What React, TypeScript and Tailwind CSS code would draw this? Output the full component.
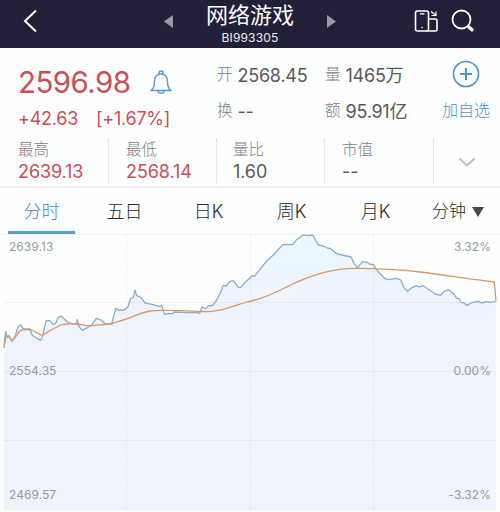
import React from "react";

const SANS = "font-['Inter','Noto_Sans_CJK_SC',sans-serif]";

const PRICE =
  "4,345 5.7,331.7 7.3,337 9,335.5 12,341.7 15,336 18,326.7 20.7,324.7 23.3,329 30,329 32.3,335.3 36.7,338.3 40.7,340.3 42.7,336 46,320.7 50,320.7 53.3,324.7 55.7,323.3 58.3,317.3 61,316 64,318.7 68.3,322.7 76,324.3 77.3,319.3 78.7,326 82.3,330.3 87.3,327.7 91.7,325 96.3,318.3 101.7,320.3 105,323.7 111.7,324 113.3,317.3 116,308.3 118.7,310.3 124,310 127.7,307.3 130.7,298.3 133.3,297.7 135,290 136.7,295.7 141,297.7 145,303 153.3,304.7 158.3,306.3 161.7,305.7 164.7,314.3 168,313.3 172.3,313.7 174.3,312 186.7,312.7 196.7,312.7 199.7,313.5 202,307 206,308.7 208.3,306 212.7,305.3 216.7,300 220.7,291.7 223.3,285.3 226,286 230,281.3 233.3,280.7 238.3,287.3 240.7,287.3 245,282.3 250,278 252,275.7 254.3,276.3 260,269.3 266.7,261 273.3,255 282.7,244.7 286.7,244.3 292.7,244.7 296.7,239.7 302.7,234.9 308.3,235.5 312.7,235 315.5,240 318.3,245 323.3,246 327.3,248 330.7,248.7 336.7,253.7 344,255.5 351,257 354,263.3 357.3,268 362.7,261.3 366.7,262.3 370,264.3 373.3,264.3 376.7,270 385,278.7 387.3,279.7 396.7,278.3 400.7,280 404.3,288.3 407.3,291.3 411.7,287.7 416.7,285.7 419,287 423.3,285.7 428.3,289.3 435,294 440.7,295.3 444,291.3 448.7,289.7 453.3,293.3 456.7,298 459,298.7 461,302.3 464.3,303 466.7,305.3 471.7,302.7 478.3,301.3 481.7,303 486.7,301.7 490,302.3 495.7,301.7";

const AVERAGE =
  "M4 348 L6 336 L9 337.3 L12.7 340 C16 338 18 331 21.7 330 C25 329.5 28 329 31.7 330 C36 331.5 39 335 42.7 335.3 C45 334 47 332 50 330.7 C55 328.5 59 325 63.3 324.3 C68 323.5 73 324 76.7 324 S84 325.7 88.3 325.7 S108 324.5 113.3 323 S124 320 130 317.7 S141 312.5 150 311 S170 310.7 180 310.7 S194 311.7 203 311.7 S220 310.3 226.7 308.3 S241 303.3 250 301.3 S274 293.5 286.7 287 S312 275.8 323.3 272.7 S343 268.3 356.7 268.3 S396 269 420 272 S470 279 494.3 282 L496 301";

function Stat({ label, value, red, width }: { label: string; value: string; red?: boolean; width: string }) {
  return (
    <div className={`${width} flex h-[44px] shrink-0 flex-col border-r border-dotted border-[#d2d2d4]`}>
      <span className="text-[15.5px] font-light leading-[21px] text-[#808084]">{label}</span>
      <span className={`text-[18px] leading-[24px] tracking-[-0.1px] ${red ? "text-[#c94f54]" : "text-[#59595b]"}`}>{value}</span>
    </div>
  );
}

function Pair({ label, value }: { label: string; value: string }) {
  return (
    <div className="flex h-[36px] items-center gap-[5px] whitespace-nowrap font-light">
      <span className="text-[15.5px] text-[#808084]">{label}</span>
      <span className="text-[18px] font-normal tracking-[-0.25px] text-[#59595b]">{value}</span>
    </div>
  );
}

function Header() {
  return (
    <header className="flex h-12 shrink-0 items-center bg-[#221f38] text-white">
      <svg className="ml-[22px] mt-[-6px] h-6 w-4" viewBox="0 0 16 24" fill="none" stroke="currentColor" strokeWidth="2">
        <path d="M14 1.5 3 12l11 10.5" />
      </svg>
      <svg className="ml-[126px] mt-[-5px] h-[13px] w-[9px]" viewBox="0 0 9 13"><path d="M9 0v13L0 6.5z" fill="#9a98a3" /></svg>
      <div className="ml-[27px] flex w-[100px] flex-col items-center">
        <h1 className="mt-[-4px] whitespace-nowrap text-[22px] font-normal leading-[30px]">网络游戏</h1>
        <span className="text-[12px] leading-[15px] tracking-[0.15px] text-[#eeedf1]">BI993305</span>
      </div>
      <svg className="ml-[27px] mt-[-5px] h-[13px] w-[9px]" viewBox="0 0 9 13"><path d="M0 0v13l9-6.5z" fill="#9a98a3" /></svg>
      <svg className="ml-[78px] mt-[-6px] h-[24px] w-[25px]" viewBox="0 0 25 24" fill="none" stroke="currentColor" strokeWidth="1.6">
        <rect x="1.5" y="2" width="13" height="20" rx="2" />
        <path d="M15 10h6.5a1.5 1.5 0 0 1 1.5 1.500v9a1.500 1.500 0 0 1-1.500 1.500H13" />
        <path d="M6 4.800h4.500M17 2.500l4.500 3.500M22 2.500v4h-4.500" strokeWidth="1.200" />
        <circle cx="8" cy="18.5" r=".8" fill="currentColor" stroke="none" />
      </svg>
      <svg className="ml-[12px] mt-[-6px] h-6 w-6" viewBox="0 0 24 24" fill="none" stroke="currentColor">
        <circle cx="10.5" cy="10.5" r="9" strokeWidth="1.8" />
        <path d="m16.800 16.800 1.700 1.700" strokeWidth="2" />
        <path d="m18 18.200 3 2.600" strokeWidth="3.400" strokeLinecap="round" />
      </svg>
    </header>
  );
}

function Quote() {
  return (
    <section className="h-[140px] shrink-0 border-b-2 border-[#f2f2f3]">
      <div className="flex h-[91px] pl-[18px]">
        <div className="w-[199px] shrink-0 text-[#c94f54]">
          <div className="flex h-[56px] items-center pt-[12px]">
            <span className="w-[132px] text-[29.5px] tracking-[-0.55px]">2596.98</span>
            <svg className="mt-[1px] h-[25px] w-[22px]" viewBox="0 0 22 25" fill="none" stroke="#559bd7" strokeWidth="1.5" strokeLinejoin="round">
              <path d="M1 20.500c3-2 3.500-5 3.500-9C4.500 7 7 4 11 4s6.500 3 6.500 7.500c0 4 .5 7 3.500 9zM8 21c.5 3 5.500 3 6 0M9 4.200V3a2 2 0 0 1 4 0v1.200" />
            </svg>
          </div>
          <div className="flex h-[29px] items-center whitespace-nowrap text-[18px] tracking-[-0.25px]">
            <span className="w-[78px]">+42.63</span>
            <span>[+1.67%]</span>
          </div>
        </div>
        <div className="w-[108px] shrink-0 pt-[9px]">
          <Pair label="开" value="2568.45" />
          <Pair label="换" value="--" />
        </div>
        <div className="w-[116px] shrink-0 pt-[9px]">
          <Pair label="量" value="1465万" />
          <Pair label="额" value="95.91亿" />
        </div>
        <button className="flex w-[50px] flex-col items-center pt-[12px] text-[#4a92d2]">
          <svg className="h-7 w-7" viewBox="0 0 28 28" fill="none" stroke="currentColor">
            <circle cx="14" cy="14" r="12.500" strokeWidth="1.600" />
            <path d="M14 8v12M8 14h12" strokeWidth="2" />
          </svg>
          <span className="mt-[10px] whitespace-nowrap text-[16px] font-light leading-[24px]">加自选</span>
        </button>
      </div>
      <div className="flex pl-[18px]">
        <Stat width="w-[91px]" label="最高" value="2639.13" red />
        <Stat width="w-[108px] pl-[17px]" label="最低" value="2568.14" red />
        <Stat width="w-[108px] pl-[16px]" label="量比" value="1.60" />
        <Stat width="w-[109px] pl-[17px]" label="市值" value="--" />
        <svg className="ml-[24px] mt-[18px] h-[11px] w-[18px]" viewBox="0 0 18 11" fill="none" stroke="#b4bccd" strokeWidth="2"><path d="m1.500 1.500 7.500 7 7.500-7" /></svg>
      </div>
    </section>
  );
}

function Tabs() {
  return (
    <nav className="flex h-[46px] shrink-0 text-[18px] font-light text-[#29292b]">
      <button className="ml-2 w-[67px] border-b-[3px] border-[#5b9bd0] pt-[3px] text-[#3d8ad0]">分时</button>
      <button className="ml-[16px] w-[67px]">五日</button>
      <button className="ml-[17px] w-[67px]">日K</button>
      <button className="ml-[16px] w-[67px]">周K</button>
      <button className="ml-[17px] w-[67px]">月K</button>
      <button className="ml-[23px] flex items-center gap-[6px] whitespace-nowrap pt-[1px] text-[17px]">
        分钟
        <svg className="mt-[1px] h-[10px] w-[12px]" viewBox="0 0 12 10"><path d="M0 0h12L6 10z" fill="#4b4b4d" /></svg>
      </button>
    </nav>
  );
}

function Chart() {
  return (
    <section className="relative h-[278px] text-[12px] leading-[16px] tracking-[0.05px] text-[#989a9f]">
      <svg className="block h-[278px] w-[500px]" viewBox="0 234 500 278" fill="none">
        <defs>
          <linearGradient id="area" x1="0" y1="234" x2="0" y2="320" gradientUnits="userSpaceOnUse">
            <stop stopColor="#e9f6fe" />
            <stop offset="1" stopColor="#eef3fc" />
          </linearGradient>
        </defs>
        <polygon points={`4,509 ${PRICE} 495.7,509`} fill="url(#area)" />
        <path d="M0 234.500H500M4 302.500H496M4 371.500H496M4 440.500H496M4 509.500H496" stroke="#54607a" strokeOpacity=".08" />
        <path d="M126.500 234V509M250.500 234V509M373.500 234V509" stroke="#54607a" strokeOpacity=".09" strokeDasharray="2 1" />
        <polyline points={PRICE} stroke="#8aadcc" strokeWidth="1.300" strokeLinejoin="round" />
        <path d={AVERAGE} stroke="#dc9566" strokeWidth="1.300" strokeLinejoin="round" />
      </svg>
      <span className="absolute left-[9px] top-[5px]">2639.13</span>
      <span className="absolute left-[9px] top-[129px]">2554.35</span>
      <span className="absolute left-[9px] top-[253px]">2469.57</span>
      <span className="absolute right-[9px] top-[5px]">3.32%</span>
      <span className="absolute right-[9px] top-[129px]">0.00%</span>
      <span className="absolute right-[9px] top-[253px]">-3.32%</span>
    </section>
  );
}

export default function App() {
  return (
    <main className={`flex h-[512px] w-[500px] flex-col overflow-hidden bg-[#fdfefe] ${SANS}`}>
      <Header />
      <Quote />
      <Tabs />
      <Chart />
    </main>
  );
}
